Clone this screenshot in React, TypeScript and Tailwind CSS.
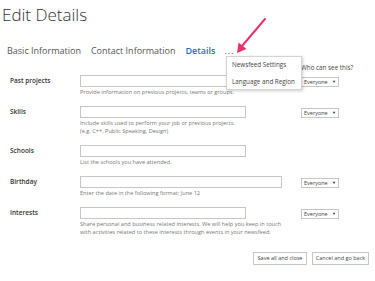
import React from 'react';

const font = { fontFamily: '"Open Sans", "Noto Sans", sans-serif' };

interface Row {
  label: string;
  help: string[];
  inputWidth: string;
  shared: boolean;
}

const rows: Row[] = [
  { label: 'Past projects', help: ['Provide information on previous projects, teams or groups.'], inputWidth: 'w-[166px]', shared: true },
  { label: 'Skills', help: ['Include skills used to perform your job or previous projects.', '(e.g. C++, Public Speaking, Design)'], inputWidth: 'w-[166px]', shared: true },
  { label: 'Schools', help: ['List the schools you have attended.'], inputWidth: 'w-[166px]', shared: false },
  { label: 'Birthday', help: ['Enter the date in the following format: June 12'], inputWidth: 'w-[202px]', shared: true },
  { label: 'Interests', help: ['Share personal and business related interests. We will help you keep in touch', 'with activities related to these interests through events in your newsfeed.'], inputWidth: 'w-[166px]', shared: true },
];

function Everyone() {
  return (
    <div className="mt-[2px] w-[38px] h-[10px] border border-[#c6c6c6] flex items-center justify-between px-[2px] text-[5.5px] text-[#444]">
      <span>Everyone</span>
      <span className="text-[4px] text-[#222]">▼</span>
    </div>
  );
}

export default function App() {
  return (
    <div className="relative w-[375px] h-[281px] bg-white overflow-hidden text-[#333]" style={font}>
      <h1 className="pl-[2px] pt-[3px] text-[17px] leading-[24px] font-light text-[#333]">Edit Details</h1>

      <div className="mt-[17px] flex items-center h-[14px] text-[9px] text-[#555]">
        <span className="ml-[7px]">Basic Information</span>
        <span className="ml-[10px]">Contact Information</span>
        <span className="ml-[10px] font-semibold text-[#2a6ebb]">Details</span>
        <span className="ml-[9px] text-[#444] tracking-[1px]">...</span>
      </div>

      <div className="mt-[5px] pl-[301px] h-[10px] leading-[10px] text-[6.3px] text-[#444]">Who can see this?</div>

      <div className="mt-[2px] flex flex-col gap-[10px]">
        {rows.map((r) => (
          <div key={r.label} className="flex items-start">
            <div className="ml-[10px] w-[70px] pt-[2px] text-[6.5px] font-semibold text-[#333] leading-[8px]">{r.label}</div>
            <div className="w-[221px]">
              <div className={`${r.inputWidth} h-[12px] border border-[#c6c6c6]`} />
              <div className="mt-[1px] text-[5.6px] leading-[8px] text-[#777]">
                {r.help.map((h) => (
                  <div key={h}>{h}</div>
                ))}
              </div>
            </div>
            {r.shared && <Everyone />}
          </div>
        ))}
      </div>

      <div className="mt-[16px] flex justify-end gap-[5px] pr-[6px]">
        <button className="w-[54px] h-[13px] border border-[#c6c6c6] text-[5.5px] text-[#444]">Save all and close</button>
        <button className="w-[57px] h-[13px] border border-[#c6c6c6] text-[5.5px] text-[#444]">Cancel and go back</button>
      </div>

      <div className="absolute left-[226px] top-[56px] w-[76px] h-[34px] bg-white border border-[#d4d4d4] shadow-[1px_1px_3px_rgba(0,0,0,0.2)] flex flex-col justify-center gap-[9px] pl-[5px] text-[6.3px] text-[#444] leading-[8px]">
        <span>Newsfeed Settings</span>
        <span>Language and Region</span>
      </div>

      <svg className="absolute left-0 top-0" width="375" height="281" viewBox="0 0 375 281">
        <line x1="265" y1="19" x2="242" y2="46" stroke="#e8336a" strokeWidth="2" strokeLinecap="round" />
        <polygon points="237,53 238.5,42.5 246.5,49" fill="#e8336a" />
      </svg>
    </div>
  );
}
